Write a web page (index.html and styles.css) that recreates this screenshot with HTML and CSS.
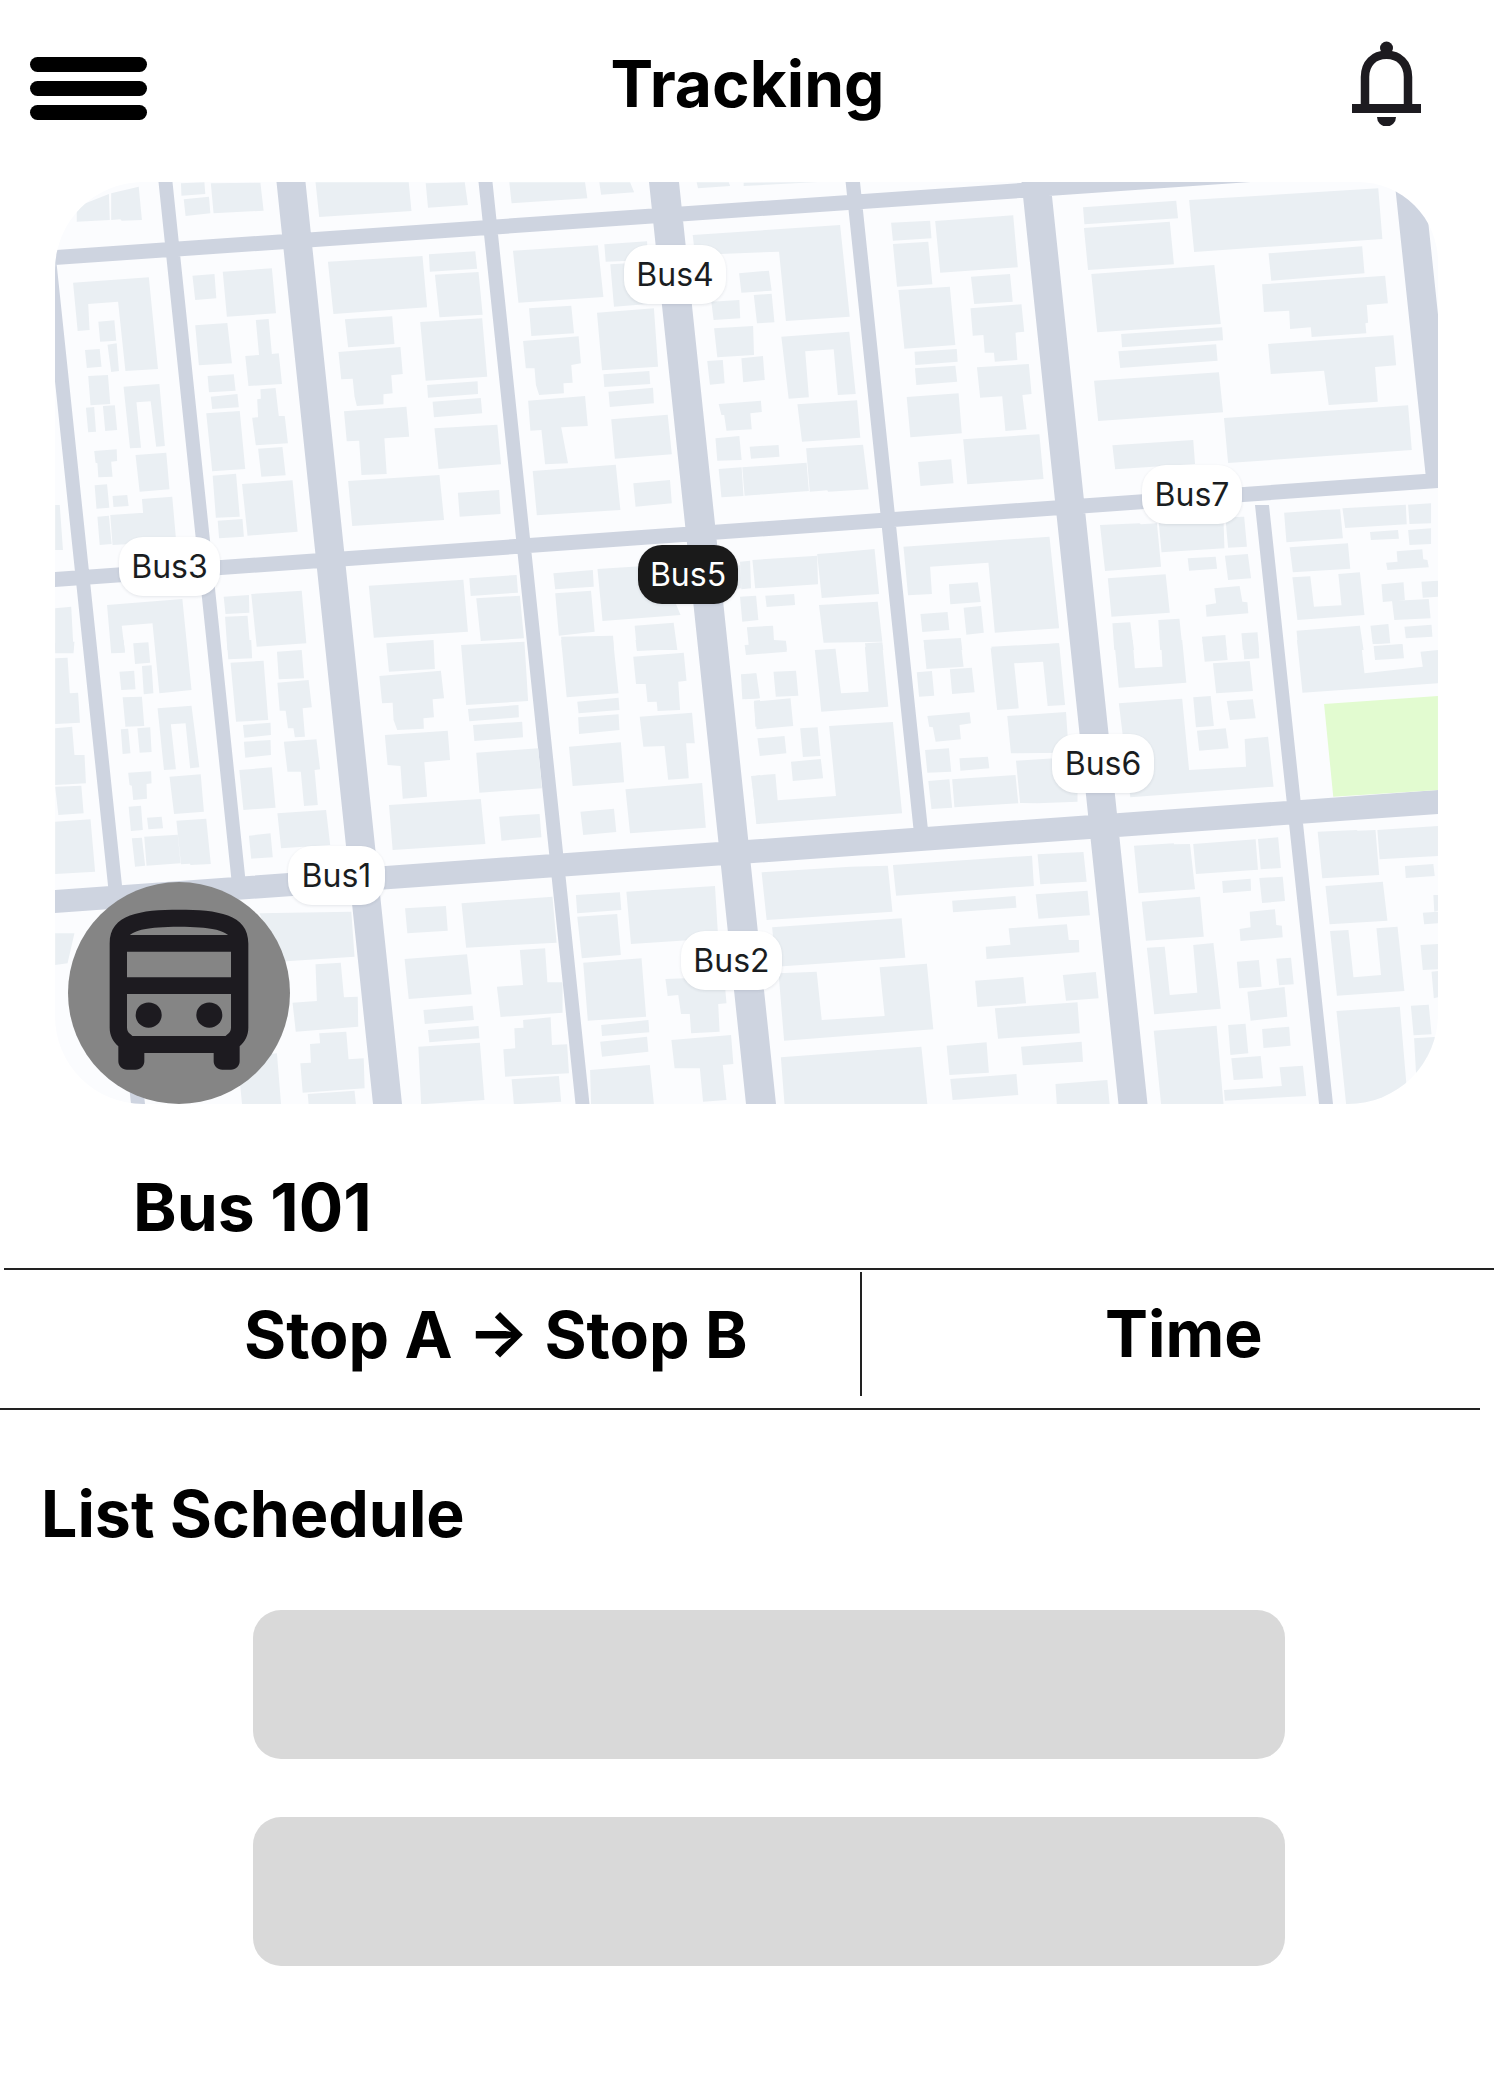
FILE: index.html
```html
<!DOCTYPE html>
<html lang="en">
<head>
<meta charset="utf-8">
<title>Tracking</title>
<link rel="stylesheet" href="styles.css">
</head>
<body>
<header class="topbar">
  <div class="menu"><span class="menu-bar"></span><span class="menu-bar"></span><span class="menu-bar"></span></div>
  <h1 class="title">Tracking</h1>
  <svg class="bell" viewBox="0 0 69 85" aria-hidden="true">
    <circle class="ic" cx="34.5" cy="7" r="6.5"/>
    <path class="bell-body" d="M13 64V36C13 22 22 13.8 34.5 13.8S56 22 56 36V64"/>
    <rect class="ic" x="0" y="63" width="69" height="9"/>
    <path class="ic" d="M25 76H44A9.5 9.5 0 0 1 25 76Z"/>
  </svg>
</header>

<section class="map">
  <svg class="map-art" viewBox="55 182 1383 922" aria-hidden="true">
    <path class="road" d="M55 250L1438 154V169L55 265Z M55 572L1438 473V488L55 587Z M55 890L1438 790V814L55 913Z
      M34 182H48L145 1104H131Z M158.5 182H172.5L246 885H232Z M276.5 182H305.5L402 1104H373Z M478.5 182H492.5L589.5 1104H575.5Z
      M649 182H679L776 1104H746Z M845.6 182H860L928 830H913.6Z M1021.5 182H1050.5L1147.5 1104H1118.5Z M1255 505H1269L1333 1104H1319Z
      M1394.7 182H1424L1456 485H1426.7Z"/>
    <g transform="translate(40 170) scale(.45918 .33333)">
      <path class="bld" d="M155 70 215 50 222 150 178 152 175 148 155 150Z M80 155 152 150 150 72 80 110Z
      M307 40 358 37 360 72 308 77Z M313 88 368 80 371 130 317 138Z M372 40 480 38 487 122 378 130Z M600 37 803 37 809 123 608 141Z M840 40 925 37 932 105 845 113Z M1022 37 1187 37 1192 85 1027 100Z M1218 37 1285 37 1294 67 1222 74Z M1430 37 1500 37 1503 48 1433 55Z
      M72 338 237 322 257 597 186 603 170 395 105 402 108 480 82 483Z M127 455 162 451 166 512 131 515Z M147 524 167 520 172 603 155 606Z M98 540 130 537 134 590 102 594Z M105 618 148 615 153 702 110 706Z M182 650 260 642 272 828 253 830 241 694 210 697 220 833 196 835Z M100 713 118 711 122 785 105 787Z M137 708 163 706 168 780 142 783Z M118 843 167 838 168 873 155 875 158 920 127 922 125 880 121 878Z M208 855 275 848 282 958 217 965Z M119 946 146 943 151 1013 123 1016Z M158 978 190 975 193 1008 160 1011Z M222 987 288 980 296 1105 230 1120Z M125 1040 150 1037 156 1122 130 1125Z M153 1035 225 1028 230 1120 158 1125Z M33 1005 43 1005 50 1140 33 1140Z
      M332 317 380 312 384 385 338 390Z M398 305 505 295 514 430 407 440Z M338 466 408 459 418 580 346 586Z M470 450 498 447 505 552 520 550 527 642 454 648 447 558 477 555Z M365 618 422 613 426 662 368 667Z M372 680 430 672 433 712 375 717Z M362 730 435 723 447 897 375 904Z M480 658 513 654 520 738 533 738 540 820 470 826 462 743 475 742 473 688 481 686Z M475 836 528 831 535 916 482 920Z M376 917 427 911 435 1040 383 1043Z M387 1052 441 1047 444 1100 390 1105Z M440 942 550 931 561 1085 452 1097Z
      M627 275 833 258 843 412 639 432Z M847 253 948 244 952 296 849 305Z M860 314 955 306 964 434 870 442Z M664 448 767 439 772 522 671 532Z M828 456 963 445 974 620 840 632Z M650 546 785 531 790 612 765 616 768 670 748 673 748 703 690 708 685 680 681 626 656 628Z M843 645 953 634 954 672 845 683Z M855 695 960 684 963 730 858 742Z M662 724 798 710 804 800 750 805 755 912 700 915 695 812 668 814Z M859 775 996 764 1004 883 868 897Z M671 933 870 915 880 1050 680 1068Z M910 968 1000 960 1003 1032 914 1040Z
      M1030 242 1215 226 1227 381 1042 398Z M1229 223 1322 214 1325 270 1232 275Z M1242 283 1340 275 1345 400 1250 410Z M1065 415 1157 407 1163 490 1070 498Z M1213 428 1337 415 1346 590 1224 601Z M1052 513 1173 499 1178 580 1157 585 1160 638 1140 640 1141 670 1087 675 1080 645 1077 595 1058 595Z M1227 613 1327 603 1329 642 1229 651Z M1238 665 1335 653 1337 700 1241 711Z M1063 692 1187 678 1193 768 1135 772 1150 880 1100 883 1092 780 1068 782Z M1244 748 1367 734 1376 853 1252 866Z M1073 903 1254 884 1264 1020 1082 1036Z M1292 940 1372 930 1376 1000 1297 1010Z
      M1462 395 1523 390 1525 445 1467 450Z M1468 475 1553 468 1555 555 1475 562Z M1453 573 1487 570 1491 640 1459 644Z M1478 702 1570 692 1572 726 1547 730 1550 778 1495 782 1490 735 1484 735Z M1471 805 1523 798 1528 870 1475 872Z M1478 897 1528 892 1532 978 1484 982Z M1533 895 1568 890 1568 973 1536 976Z
      M146 1305 310 1287 330 1560 260 1570 245 1360 178 1367 185 1445 155 1450Z M33 1315 68 1310 73 1440 33 1440Z M400 1280 455 1275 456 1328 404 1332Z M460 1272 570 1262 580 1420 472 1430Z M403 1340 452 1337 458 1440 408 1440Z M716 1247 922 1229 932 1385 727 1403Z M935 1225 1038 1215 1041 1268 938 1278Z M950 1285 1045 1277 1054 1405 960 1413Z M1118 1210 1204 1200 1206 1250 1122 1258Z M1214 1197 1350 1185 1395 1335 1225 1353Z M1122 1270 1200 1262 1208 1385 1130 1397Z M1295 1367 1380 1358 1388 1440 1300 1440Z M1135 1400 1248 1397 1250 1440 1137 1440Z M1490 1190 1525 1186 1528 1255 1494 1260Z"/>
    </g>
    <g transform="translate(740 170) scale(.45918 .33333)">
      <path class="bld" d="M8 38 170 36 8 48Z M-103 195 218 165 239 440 100 453 85 245 -98 255Z M-2 310 63 302 69 362 3 368Z M30 375 69 371 75 457 37 460Z M3 565 50 558 54 630 7 637Z M90 500 238 485 252 672 213 675 204 538 142 544 150 682 106 686Z M125 703 255 691 262 803 135 815Z M21 830 84 825 86 860 24 866Z M144 835 268 824 280 958 192 965 190 961 152 965Z M5 892 145 878 150 963 10 977Z
      M329 158 414 152 417 205 333 212Z M425 153 595 136 605 292 436 308Z M333 222 410 215 419 343 342 350Z M345 360 457 350 469 525 358 536Z M503 320 588 312 594 395 510 402Z M502 415 613 403 619 485 600 488 604 570 555 575 553 548 533 548 530 495 507 497Z M380 545 472 537 474 575 382 585Z M381 595 469 587 473 635 384 645Z M516 592 629 582 635 672 615 675 624 778 578 783 571 679 523 683Z M363 681 476 670 483 790 371 802Z M486 808 652 793 661 927 495 943Z M388 876 460 868 465 940 393 948Z
      M747 112 950 92 954 145 750 163Z M978 90 1390 55 1399 207 989 246Z M749 174 936 155 945 283 758 300Z M765 312 1033 285 1047 462 778 487Z M1151 250 1355 229 1360 310 1157 332Z M1137 343 1405 317 1411 400 1365 405 1368 458 1362 460 1364 490 1245 501 1243 472 1198 477 1196 422 1141 426Z M830 492 1050 472 1052 511 832 532Z M824 544 1037 523 1040 572 828 594Z M771 632 1043 607 1052 727 780 753Z M1150 522 1423 496 1429 586 1383 591 1389 695 1282 705 1272 602 1156 612Z M1054 744 1455 706 1463 840 1063 879Z M811 826 987 810 991 882 817 898Z
      M0 1175 22 1172 24 1255 3 1258Z M27 1170 168 1157 170 1243 33 1255Z M168 1152 205 1148 293 1137 303 1272 178 1284Z M55 1277 118 1272 120 1305 58 1311Z M0 1280 35 1277 40 1350 5 1355Z M172 1305 300 1295 310 1415 182 1418Z M15 1372 72 1367 74 1410 100 1412 102 1440 20 1440Z M272 1420 310 1417 312 1440 275 1440Z
      M356 1130 674 1100 695 1375 555 1388 541 1178 414 1190 418 1272 366 1276Z M455 1243 518 1237 524 1296 458 1303Z M393 1332 452 1326 456 1380 397 1386Z M487 1313 525 1308 531 1388 493 1394Z M400 1410 481 1404 484 1440 402 1440Z M547 1430 694 1420 696 1440 550 1440Z
      M784 1065 870 1060 873 1063 908 1060 917 1190 795 1203Z M912 1058 1053 1050 1055 1135 918 1147Z M1057 1042 1098 1040 1104 1130 1063 1133Z M975 1165 1036 1160 1039 1196 978 1202Z M1056 1157 1106 1152 1113 1225 1063 1230Z M801 1225 927 1213 936 1328 809 1340Z M1033 1255 1088 1248 1094 1295 1105 1297 1107 1330 1016 1340 1014 1305 1037 1300Z M811 1360 850 1357 858 1440 815 1440Z M911 1350 957 1346 964 1440 915 1440Z M1006 1400 1057 1395 1060 1440 1010 1440Z M1092 1390 1127 1387 1130 1440 1095 1440Z
      M1185 1028 1270 1020 1307 1018 1313 1105 1190 1117Z M1312 1015 1450 1004 1452 1063 1318 1074Z M1455 1004 1505 1000 1505 1060 1458 1062Z M1372 1086 1433 1080 1435 1106 1374 1110Z M1455 1080 1505 1075 1505 1122 1458 1125Z M1197 1132 1324 1120 1329 1196 1204 1207Z M1430 1144 1486 1138 1488 1168 1497 1170 1500 1192 1410 1200 1407 1178 1432 1175Z M1203 1222 1242 1219 1250 1310 1310 1306 1303 1212 1350 1207 1360 1335 1214 1350Z M1397 1243 1445 1237 1448 1290 1400 1296Z M1484 1235 1520 1232 1520 1280 1487 1283Z M1420 1293 1500 1287 1504 1345 1425 1350Z M1212 1382 1350 1367 1358 1440 1216 1440Z M1373 1367 1412 1362 1416 1418 1378 1422Z M1447 1370 1506 1364 1508 1400 1450 1405Z M1380 1428 1442 1422 1444 1440 1382 1440Z"/>
    </g>
    <g transform="translate(40 640) scale(.45918 .33333)">
      <path class="bld" d="M33 55 60 53 65 160 83 158 87 248 33 252Z M33 265 70 260 75 345 97 345 100 430 33 435Z M33 440 90 437 95 520 40 525Z M33 545 110 538 120 695 33 702Z M33 10 75 5 73 40 33 40Z
      M155 0 182 0 185 38 158 40Z M203 10 236 7 240 68 207 72Z M222 78 243 76 247 160 226 163Z M173 95 205 92 208 148 177 150Z M180 172 222 170 227 258 186 260Z M256 205 330 197 347 382 327 385 317 250 285 253 296 388 270 390Z M176 268 192 266 197 340 180 342Z M212 265 240 262 243 336 217 338Z M192 398 242 394 243 430 232 432 233 476 203 480 200 437 195 435Z M282 410 350 403 357 515 292 522Z M193 500 220 497 224 570 198 573Z M233 533 265 530 268 565 236 568Z M297 542 362 536 372 672 328 675 326 671 307 673Z M200 595 222 593 229 677 207 680Z M227 590 300 584 306 670 232 677Z
      M407 0 460 0 462 55 410 58Z M516 35 570 30 575 115 520 118Z M415 68 487 62 497 240 427 245Z M517 128 585 120 592 202 572 205 577 290 555 292 552 265 540 265 535 212 522 212Z M442 255 502 248 503 285 445 293Z M444 305 502 300 503 345 447 353Z M531 305 602 298 610 388 598 390 605 495 575 498 568 395 539 395Z M434 390 505 382 513 503 443 510Z M517 520 623 510 632 615 525 625Z M455 587 502 580 507 652 460 656Z
      M754 10 857 0 860 87 760 95Z M917 15 1055 5 1063 183 928 195Z M739 108 873 92 880 175 855 178 858 232 835 235 836 266 778 270 770 240 768 188 745 190Z M932 207 1042 195 1043 232 935 244Z M943 255 1050 245 1052 292 946 303Z M751 285 888 272 893 360 837 367 843 470 790 476 785 378 757 375Z M950 338 1085 325 1093 445 957 458Z M760 495 960 477 970 612 768 630Z M1000 530 1088 522 1092 592 1005 602Z
      M1135 0 1248 0 1260 160 1147 172Z M1297 0 1383 0 1385 28 1300 33Z M1292 50 1402 38 1408 122 1390 125 1394 210 1345 213 1343 185 1323 186 1319 132 1298 132Z M1170 185 1260 173 1262 210 1173 220Z M1172 232 1260 223 1262 270 1174 282Z M1306 230 1420 218 1426 310 1407 310 1413 415 1368 419 1360 318 1314 320Z M1152 320 1265 307 1272 427 1160 438Z M1275 448 1442 429 1450 563 1285 580Z M1177 515 1250 506 1255 576 1183 585Z
      M1528 105 1560 100 1568 175 1535 178Z M1555 182 1568 180 1568 257 1558 260Z M1550 410 1568 405 1568 552 1560 552Z
      M478 820 678 815 685 950 520 965Z M33 880 75 880 60 970 33 975Z M600 973 655 968 662 1072 692 1070 693 1160 557 1175 550 1088 603 1083Z M588 1212 610 1210 608 1180 667 1175 672 1258 705 1255 707 1345 572 1358 567 1270 590 1268Z M583 1362 685 1352 688 1393 585 1393Z M430 1250 516 1240 525 1393 440 1393Z
      M795 805 884 798 888 872 800 880Z M918 790 1116 770 1125 908 928 923Z M794 957 930 943 940 1063 803 1077Z M1045 930 1100 925 1105 1027 1138 1027 1138 1118 1003 1131 995 1040 1052 1035Z M835 1110 942 1097 945 1140 838 1152Z M845 1170 955 1158 957 1195 848 1207Z M1052 1140 1112 1132 1115 1215 1148 1213 1152 1300 1013 1310 1009 1228 1035 1225 1033 1165 1053 1163Z M824 1220 958 1208 968 1380 830 1393Z M1027 1318 1130 1308 1135 1385 1032 1393Z
      M1167 765 1263 757 1266 810 1170 820Z M1277 755 1470 738 1477 895 1287 912Z M1170 830 1257 822 1265 945 1180 955Z M1183 968 1310 955 1320 1130 1193 1142Z M1362 1017 1490 1010 1495 1090 1477 1092 1480 1175 1418 1180 1415 1122 1396 1122 1390 1065 1367 1068Z M1222 1155 1325 1140 1327 1177 1224 1188Z M1220 1205 1322 1190 1325 1235 1224 1250Z M1375 1200 1505 1185 1510 1272 1487 1275 1495 1380 1444 1385 1437 1285 1382 1285Z M1198 1290 1328 1275 1337 1393 1200 1393Z"/>
    </g>
    <g transform="translate(740 640) scale(.45918 .33333)">
      <path class="bld" d="M10 15 100 8 102 35 13 45Z M163 30 208 26 220 160 280 155 272 20 310 15 323 200 177 215Z M2 103 35 100 40 175 5 178Z M73 95 122 92 127 167 78 170Z M30 185 110 175 116 258 36 268Z M38 295 97 288 101 340 43 348Z M131 265 169 262 175 348 137 351Z M111 365 176 357 181 415 115 423Z M194 258 333 246 353 520 37 552 24 408 77 402 82 481 209 468Z
      M400 0 480 0 487 80 406 87Z M546 25 695 10 708 195 670 198 660 65 597 70 607 205 560 210Z M385 97 418 93 423 167 390 170Z M457 88 505 83 511 157 462 162Z M408 228 500 217 503 250 478 255 481 298 426 305 420 262 412 260Z M582 228 710 216 716 338 590 340Z M403 330 455 325 460 395 408 398Z M478 355 540 350 543 385 480 392Z M601 362 735 350 735 485 648 490 610 489Z M410 423 456 418 462 503 417 507Z M462 418 600 405 606 490 467 502Z
      M815 0 855 0 860 85 920 80 917 0 963 0 972 128 825 143Z M1007 0 1057 0 1062 60 1012 65Z M1095 0 1128 0 1131 55 1098 58Z M1030 70 1110 63 1117 153 1037 160Z M987 172 1025 168 1032 258 993 262Z M1060 183 1117 178 1123 235 1067 240Z M825 190 963 176 978 390 1102 380 1099 297 1150 290 1162 440 850 472Z M995 272 1058 265 1064 325 1000 332Z
      M1213 0 1352 0 1360 100 1487 80 1482 35 1520 30 1520 130 1225 158Z M1380 20 1443 13 1446 55 1383 60Z M1377 0 1415 0 1416 10 1380 12Z
      M47 697 240 680 322 677 332 815 58 840Z M333 675 636 647 640 738 340 767Z M648 643 748 636 755 725 654 733Z M462 782 600 768 602 803 464 817Z M644 763 757 752 762 826 650 836Z M70 862 352 835 360 953 78 980Z M585 865 712 853 716 900 738 900 739 937 537 957 535 920 589 914Z M84 1000 167 995 178 1140 315 1128 304 982 407 971 421 1168 96 1202Z M512 1022 617 1011 623 1090 517 1101Z M703 1005 775 996 781 1075 710 1082Z M555 1105 735 1087 740 1180 562 1196Z M89 1252 395 1220 408 1393 97 1393Z M450 1217 537 1207 542 1298 456 1305Z M612 1220 744 1205 747 1265 616 1276Z M458 1317 602 1302 606 1365 463 1380Z M687 1332 800 1320 805 1393 690 1393Z
      M858 617 945 610 945 613 980 612 991 748 868 760Z M987 612 1123 598 1128 689 993 702Z M1128 597 1172 592 1178 684 1134 688Z M1050 723 1112 716 1113 752 1052 759Z M1131 714 1182 710 1187 783 1137 789Z M875 785 1002 770 1010 890 884 902Z M1110 815 1165 808 1168 855 1180 857 1182 892 1090 903 1088 867 1112 862Z M886 923 925 920 936 1065 996 1058 987 915 1031 909 1047 1106 902 1123Z M1082 965 1130 960 1136 1040 1087 1045Z M1168 956 1200 953 1206 1033 1174 1036Z M1105 1055 1186 1041 1192 1130 1112 1142Z M901 1172 1038 1157 1053 1393 917 1393Z M1063 1155 1101 1151 1107 1240 1068 1245Z M1137 1167 1196 1160 1199 1217 1140 1224Z M1070 1255 1134 1248 1139 1315 1075 1320Z M1175 1282 1226 1277 1233 1368 1056 1382 1054 1350 1180 1338Z
      M1258 575 1343 570 1345 572 1384 570 1392 705 1268 715Z M1388 570 1520 558 1520 648 1393 658Z M1448 678 1510 672 1513 708 1450 714Z M1275 738 1400 725 1410 842 1284 853Z M1510 765 1520 765 1520 812 1512 815Z M1487 818 1520 815 1520 850 1490 853Z M1285 873 1325 870 1336 1012 1396 1005 1386 865 1432 860 1447 1053 1300 1067Z M1482 915 1520 912 1520 988 1487 990Z M1506 995 1520 993 1520 1072 1511 1075Z M1299 1113 1437 1100 1455 1393 1320 1393Z M1461 1097 1500 1094 1506 1183 1467 1186Z M1468 1195 1520 1190 1520 1393 1476 1393Z"/>
      <path class="park" d="M1272 192 1520 168 1520 450 1292 470Z"/>
    </g>
  </svg>
  <span class="pin pin-1">Bus1</span>
  <span class="pin pin-2">Bus2</span>
  <span class="pin pin-3">Bus3</span>
  <span class="pin pin-4">Bus4</span>
  <span class="pin pin-5">Bus5</span>
  <span class="pin pin-6">Bus6</span>
  <span class="pin pin-7">Bus7</span>
  <div class="bus-badge">
    <svg class="bus-icon" viewBox="0 0 24 24" preserveAspectRatio="none" aria-hidden="true">
      <path class="ic" d="M12 2c-4.42 0-8 .5-8 4v10c0 .88.39 1.67 1 2.22V20c0 .55.45 1 1 1h1c.55 0 1-.45 1-1v-1h8v1c0 .55.45 1 1 1h1c.55 0 1-.45 1-1v-1.78c.61-.55 1-1.34 1-2.22V6c0-3.5-3.58-4-8-4zm5.66 2.99H6.34C6.89 4.46 8.31 4 12 4s5.11.46 5.66.99zm.34 2V10H6V6.99h12zm-.34 9.74l-.29.27H6.63l-.29-.27C6.21 16.62 6 16.37 6 16v-4h12v4c0 .37-.21.62-.34.73z"/>
      <circle class="ic" cx="8.5" cy="14.5" r="1.5"/>
      <circle class="ic" cx="15.5" cy="14.5" r="1.5"/>
    </svg>
  </div>
</section>

<h2 class="bus-name">Bus 101</h2>
<div class="route">
  <div class="route-stops">Stop A → Stop B</div>
  <div class="route-time">Time</div>
</div>

<h2 class="schedule-title">List Schedule</h2>
<div class="schedule">
  <div class="schedule-card"></div>
  <div class="schedule-card"></div>
</div>
</body>
</html>
```

FILE: styles.css
```css
* { box-sizing: border-box; }

body {
  margin: 0;
  background: #fff;
  color: #000;
  font-family: Inter, "Liberation Sans", sans-serif;
}

.topbar {
  display: grid;
  grid-template-columns: 117px 1fr 69px;
  align-items: start;
  height: 182px;
  padding: 0 73px 0 30px;
}

.menu {
  display: flex;
  flex-direction: column;
  gap: 9px;
  margin-top: 57px;
}

.menu-bar {
  height: 15px;
  border-radius: 8px;
  background: #000;
}

.title {
  margin: 45px 4px 0 0;
  font-size: 64px;
  font-weight: 700;
  line-height: 78px;
  text-align: center;
}

.bell {
  width: 69px;
  height: 85px;
  margin-top: 41px;
}

.ic { fill: #1d1b20; }

.bell-body {
  fill: none;
  stroke: #1d1b20;
  stroke-width: 8.5;
}

.map {
  position: relative;
  width: 1383px;
  height: 922px;
  margin-left: 55px;
  border-radius: 88px 80px 90px 88px;
  overflow: hidden;
  background: #fbfcfe;
}

.map-art {
  display: block;
  width: 100%;
  height: 100%;
}

.road { fill: #ced4e0; }
.bld { fill: #eaeff3; }
.park { fill: #e2fbd0; }

.pin {
  position: absolute;
  display: flex;
  align-items: center;
  justify-content: center;
  width: 100px;
  height: 59px;
  border-radius: 24px;
  background: #fff;
  color: #1a1d21;
  font-size: 32px;
  box-shadow: 0 1px 3px rgba(30, 40, 60, .1);
}

.pin-1 { left: 233px; top: 664px; width: 97px; }
.pin-2 { left: 626px; top: 749px; width: 101px; }
.pin-3 { left: 64px; top: 355px; width: 101px; }
.pin-4 { left: 569px; top: 63px; width: 102px; }
.pin-5 { left: 583px; top: 363px; background: #1a1a1a; color: #fff; }
.pin-6 { left: 997px; top: 552px; width: 102px; }
.pin-7 { left: 1087px; top: 283px; }

.bus-badge {
  position: absolute;
  left: 13px;
  top: 700px;
  width: 222px;
  height: 222px;
  border-radius: 50%;
  background: #858585;
}

.bus-icon {
  position: absolute;
  left: 7px;
  top: 11px;
  width: 208px;
  height: 202px;
}

.bus-name {
  height: 166px;
  margin: 0 0 0 4px;
  padding: 64px 0 0 129px;
  border-bottom: 2px solid #222;
  font-size: 66px;
  font-weight: 700;
  line-height: 78px;
}

.route {
  display: flex;
  height: 140px;
  padding-top: 2px;
  margin-right: 14px;
  border-bottom: 2px solid #222;
  font-size: 64.4px;
  font-weight: 700;
  line-height: 78px;
}

.route-stops {
  width: 862px;
  height: 124px;
  padding: 24px 0 0 244px;
  border-right: 2px solid #222;
}

.route-time {
  padding: 23px 0 0 243px;
}

.schedule-title {
  margin: 65px 0 0 41px;
  font-size: 64.4px;
  font-weight: 700;
  line-height: 78px;
}

.schedule {
  display: flex;
  flex-direction: column;
  gap: 58px;
  margin: 57px 0 0 253px;
}

.schedule-card {
  width: 1032px;
  height: 149px;
  border-radius: 28px;
  background: #d9d9d9;
}
```
